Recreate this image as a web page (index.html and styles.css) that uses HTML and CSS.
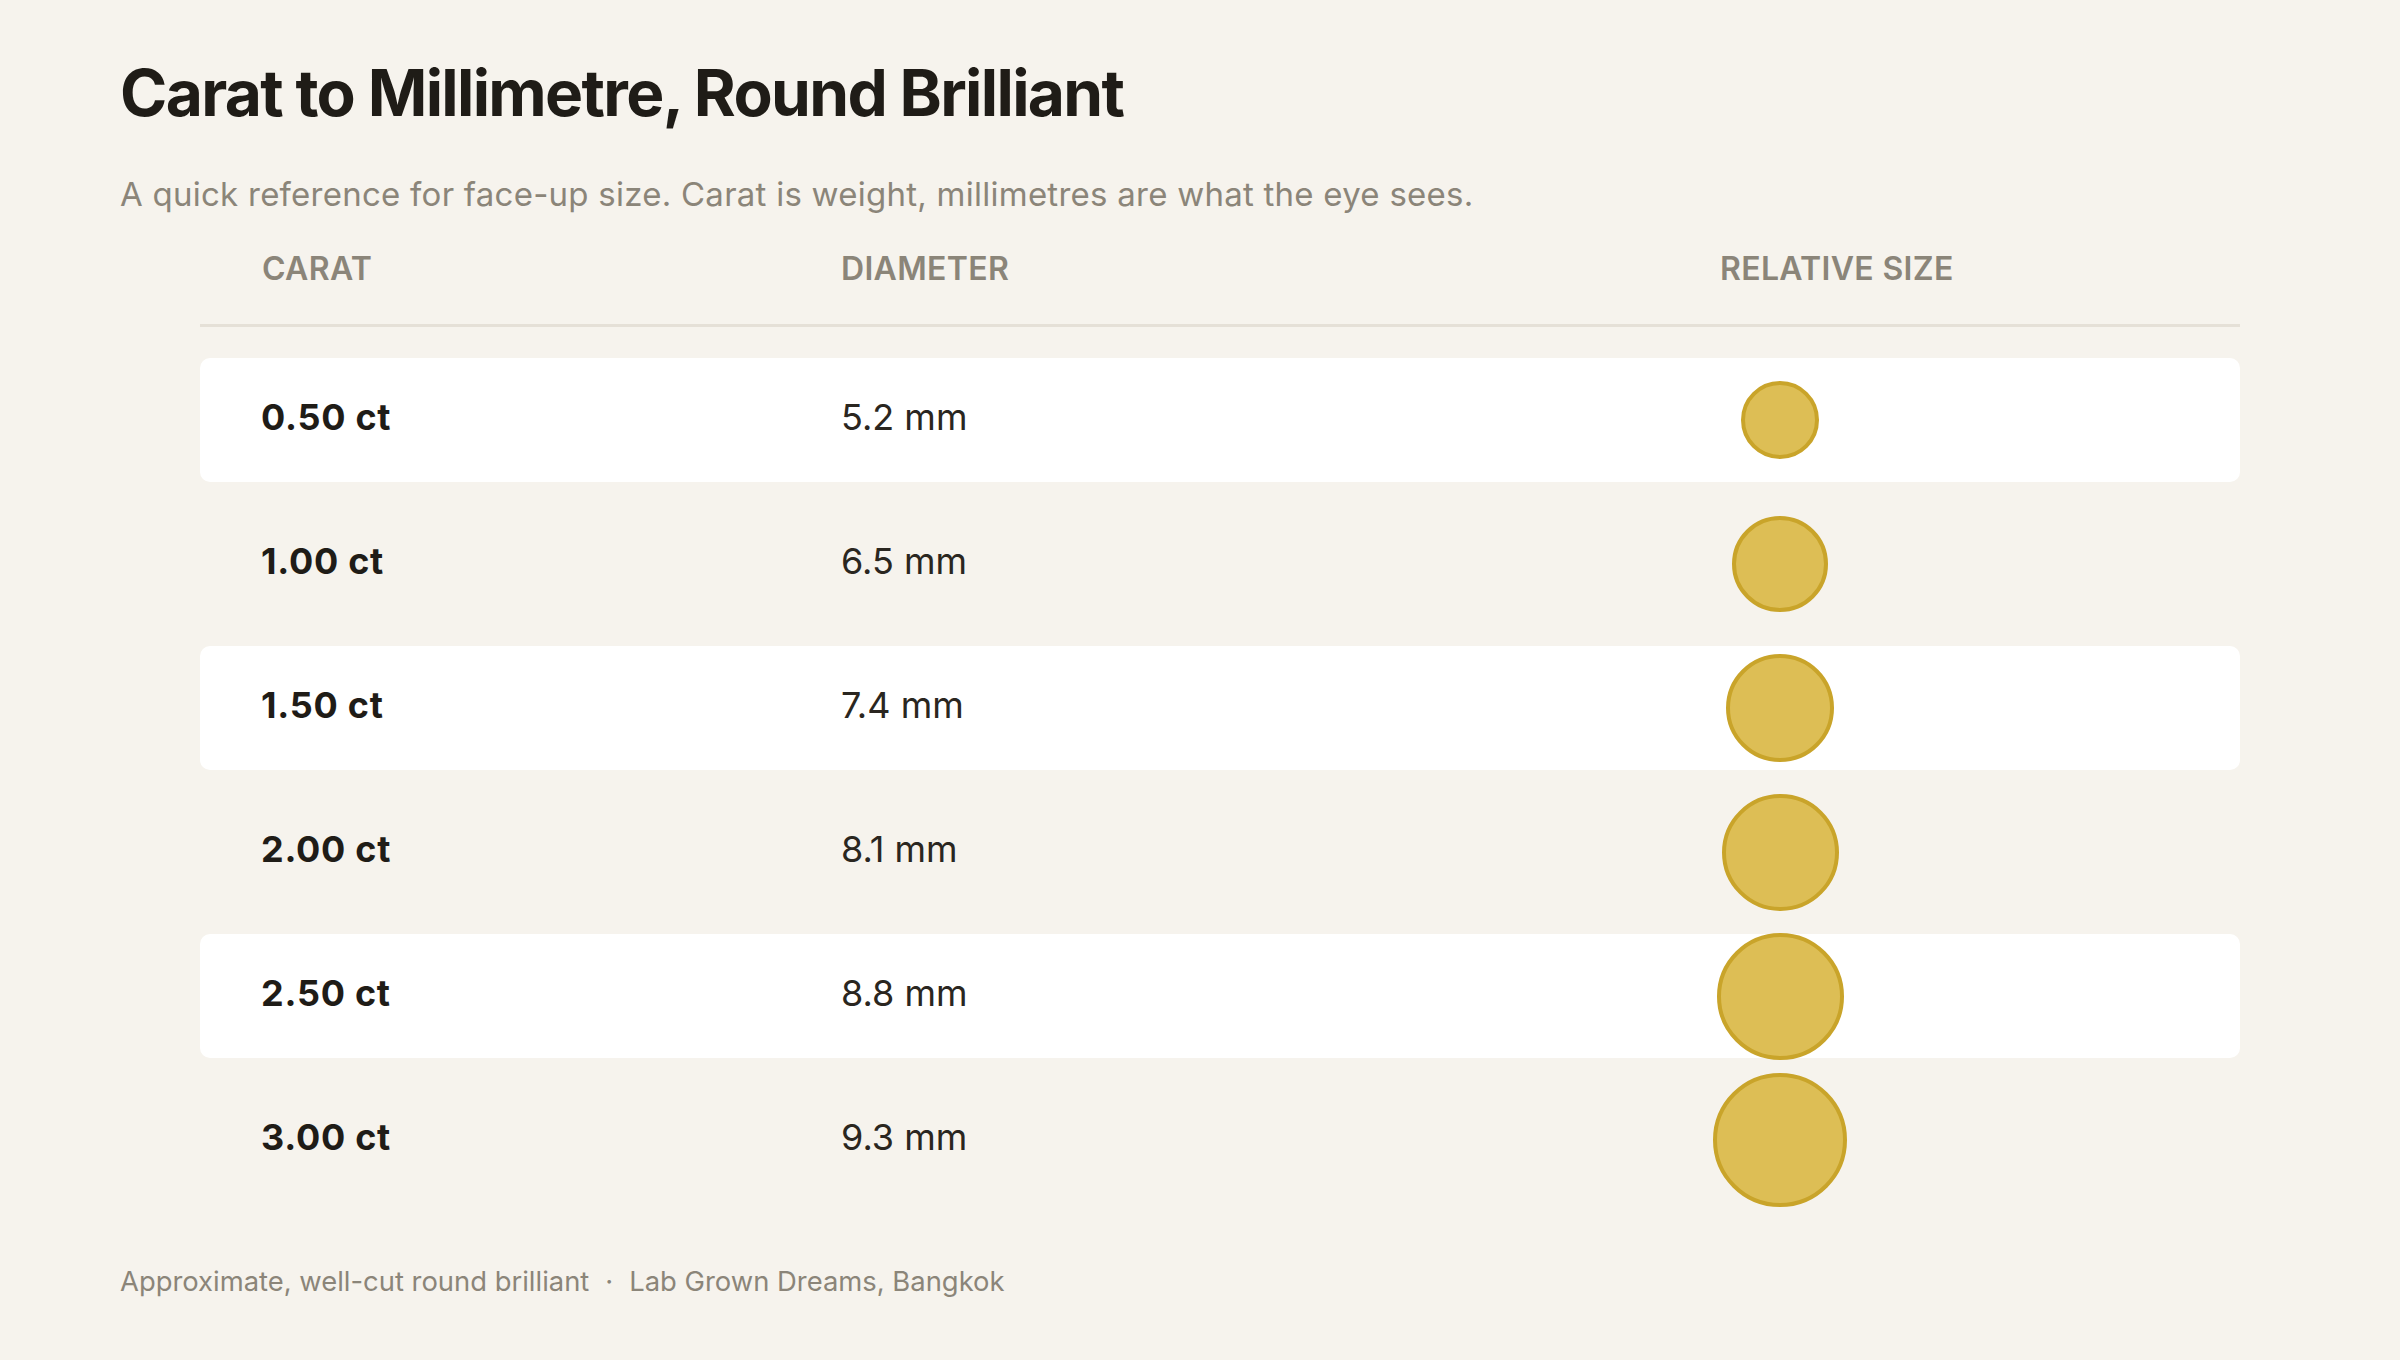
FILE: index.html
```html
<!DOCTYPE html>
<html lang="en">
<head>
<meta charset="utf-8">
<title>Carat to Millimetre, Round Brilliant</title>
<link rel="stylesheet" href="styles.css">
</head>
<body>
<main class="page">
  <h1 class="title">Carat to Millimetre, Round Brilliant</h1>
  <p class="subtitle">A quick reference for face-up size. Carat is weight, millimetres are what the eye sees.</p>
  <section class="table">
    <div class="head">
      <div class="th">Carat</div>
      <div class="th">Diameter</div>
      <div class="th">Relative size</div>
    </div>
    <div class="rows">
      <div class="row alt"><div class="ct">0.50 ct</div><div class="mm">5.2 mm</div><div class="size"><span class="stone" style="width:78px;height:78px"></span></div></div>
      <div class="row"><div class="ct">1.00 ct</div><div class="mm">6.5 mm</div><div class="size"><span class="stone" style="width:96px;height:96px"></span></div></div>
      <div class="row alt"><div class="ct">1.50 ct</div><div class="mm">7.4 mm</div><div class="size"><span class="stone" style="width:108px;height:108px"></span></div></div>
      <div class="row"><div class="ct">2.00 ct</div><div class="mm">8.1 mm</div><div class="size"><span class="stone" style="width:117px;height:117px"></span></div></div>
      <div class="row alt"><div class="ct">2.50 ct</div><div class="mm">8.8 mm</div><div class="size"><span class="stone" style="width:127px;height:127px"></span></div></div>
      <div class="row"><div class="ct">3.00 ct</div><div class="mm">9.3 mm</div><div class="size"><span class="stone" style="width:134px;height:134px"></span></div></div>
    </div>
  </section>
  <footer class="foot">Approximate, well-cut round brilliant<span class="dot">·</span>Lab Grown Dreams, Bangkok</footer>
</main>
</body>
</html>
```
FILE: styles.css
```css
html, body {
  margin: 0;
  padding: 0;
  background: #f6f3ed;
}
body {
  font-family: Inter, "Noto Sans", "Liberation Sans", sans-serif;
  color: #1f1c17;
}
.page {
  width: 2400px;
  height: 1360px;
  box-sizing: border-box;
  padding: 61px 120px 0 120px;
}
.title {
  margin: 0;
  font-size: 64px;
  line-height: 1;
  font-weight: 700;
  letter-spacing: -0.026em;
  color: #1f1c17;
}
.subtitle {
  margin: 53px 0 0 0;
  font-size: 33px;
  line-height: 1;
  font-weight: 400;
  letter-spacing: 0.25px;
  color: #8b8579;
}
.table {
  margin: 42px 0 0 80px;
  width: 2040px;
}
.head {
  display: grid;
  grid-template-columns: 579px 879px 1fr;
  padding: 0 0 39px 62px;
  border-bottom: 3px solid #e5e0d7;
}
.th {
  font-size: 32px;
  line-height: 1;
  font-weight: 600;
  text-transform: uppercase;
  letter-spacing: 0.01em;
  color: #8b8579;
}
.rows {
  display: flex;
  flex-direction: column;
  gap: 20px;
  margin-top: 31px;
}
.row {
  display: grid;
  grid-template-columns: 579px 879px 1fr;
  align-items: center;
  height: 124px;
  padding: 0 0 0 62px;
  border-radius: 10px;
}
.row.alt {
  background: #ffffff;
}
.ct {
  font-size: 36px;
  line-height: 1;
  font-weight: 700;
  letter-spacing: 0.02em;
  color: #1f1c17;
  position: relative;
  top: -3px;
  left: -1px;
}
.mm {
  font-size: 36px;
  line-height: 1;
  font-weight: 400;
  color: #2a2620;
  position: relative;
  top: -3px;
}
.size {
  width: 120px;
  height: 124px;
  display: flex;
  align-items: center;
  justify-content: center;
}
.stone {
  flex: none;
  box-sizing: border-box;
  border-radius: 50%;
  background: #ddbe55;
  border: 4px solid #c9a42a;
}
.foot {
  margin-top: 66px;
  font-size: 27.4px;
  line-height: 1;
  color: #8b8579;
}
.dot {
  margin: 0 16px;
}
```
